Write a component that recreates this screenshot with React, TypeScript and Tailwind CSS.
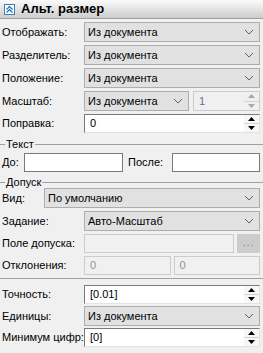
import type { ReactNode } from "react";

const font = { fontFamily: '"Liberation Sans", Arial, sans-serif' };

function Chevron() {
  return (
    <svg width="10" height="6" viewBox="0 0 10 6" className="shrink-0">
      <path d="M1 1 L5 5 L9 1" fill="none" stroke="#606060" strokeWidth="1" />
    </svg>
  );
}

function Combo({ value, className = "" }: { value: string; className?: string }) {
  return (
    <div
      className={`flex h-[20px] items-center justify-between border border-[#adadad] bg-[#e1e1e1] pl-[3px] pr-[5px] text-[11px] text-black ${className}`}
    >
      <span className="whitespace-nowrap">{value}</span>
      <Chevron />
    </div>
  );
}

function SpinArrows({ disabled = false }: { disabled?: boolean }) {
  const c = disabled ? "#a8a8a8" : "#000";
  return (
    <div className={`flex h-full w-[15px] shrink-0 flex-col ${disabled ? "" : "bg-[#f7f7f7]"}`}>
      <div className="flex flex-1 items-center justify-center border-b border-[#d4d4d4]">
        <svg width="7" height="4" viewBox="0 0 7 4">
          <path d="M0 4 L3.5 0 L7 4 Z" fill={c} />
        </svg>
      </div>
      <div className="flex flex-1 items-center justify-center">
        <svg width="7" height="4" viewBox="0 0 7 4">
          <path d="M0 0 L3.5 4 L7 0 Z" fill={c} />
        </svg>
      </div>
    </div>
  );
}

function SpinBox({
  value,
  disabled = false,
  className = "",
}: {
  value: string;
  disabled?: boolean;
  className?: string;
}) {
  return (
    <div
      className={`flex items-center border text-[11px] ${
        disabled
          ? "h-[20px] border-[#cccccc] bg-[#f0f0f0] text-[#6d6d8d]"
          : "h-[19px] border-[#7a7a7a] border-b-[#e3e3e3] border-r-[#e3e3e3] bg-white text-black"
      } ${className}`}
    >
      <span className="flex-1 pl-[5px]">{value}</span>
      <SpinArrows disabled={disabled} />
    </div>
  );
}

function TextBox({
  value = "",
  disabled = false,
  className = "",
}: {
  value?: string;
  disabled?: boolean;
  className?: string;
}) {
  return (
    <div
      className={`flex h-[19px] items-center border pl-[5px] text-[11px] ${
        disabled ? "border-[#cccccc] bg-[#f0f0f0] text-[#909090]" : "border-[#7a7a7a] bg-white text-black"
      } ${className}`}
    >
      {value}
    </div>
  );
}

function Row({ label, children, labelW = "w-[84px]" }: { label: string; children: ReactNode; labelW?: string }) {
  return (
    <div className="flex items-center">
      <span className={`${labelW} shrink-0 whitespace-nowrap pl-[2px] text-[11px] text-black`}>{label}</span>
      <div className="flex min-w-0 flex-1 items-center gap-[3px]">{children}</div>
    </div>
  );
}

function Group({ title }: { title: string }) {
  return (
    <div className="flex h-[12px] items-center gap-[1px] text-[11px] leading-none text-black">
      <div className="h-px w-[5px] bg-[#a0a0a0]" />
      <span>{title}</span>
      <div className="h-px flex-1 bg-[#a0a0a0]" />
    </div>
  );
}

export default function App() {
  return (
    <div className="h-[353px] w-[263px] overflow-hidden bg-[#f0f0f0]" style={font}>
      <div className="flex h-[19px] items-center gap-[6px] border-b border-[#a0a0a0] bg-gradient-to-b from-[#fbfbfb] to-[#cdcdcd] pl-[4px]">
        <div className="flex h-[11px] w-[11px] items-center justify-center border border-[#3c7fb1] bg-white">
          <svg width="9" height="9" viewBox="0 0 9 9">
            <path
              d="M1.5 4.5 L4.5 1.5 L7.5 4.5 M1.5 7.5 L4.5 4.5 L7.5 7.5"
              fill="none"
              stroke="#1e73be"
              strokeWidth="1.2"
            />
          </svg>
        </div>
        <span className="text-[13px] font-bold text-black">Альт. размер</span>
      </div>

      <div className="flex flex-col gap-[3px] pr-[3px] pt-[3px]">
        <Row label="Отображать:">
          <Combo value="Из документа" className="flex-1" />
        </Row>
        <Row label="Разделитель:">
          <Combo value="Из документа" className="flex-1" />
        </Row>
        <Row label="Положение:">
          <Combo value="Из документа" className="flex-1" />
        </Row>
        <Row label="Масштаб:">
          <Combo value="Из документа" className="w-[105px]" />
          <SpinBox value="1" disabled className="ml-[1px] flex-1" />
        </Row>
        <Row label="Поправка:">
          <SpinBox value="0" className="flex-1" />
        </Row>
      </div>

      <div className="mt-[5px]">
        <Group title="Текст" />
      </div>
      <div className="mt-[3px] flex items-center pr-[3px]">
        <span className="w-[24px] shrink-0 pl-[2px] text-[11px]">До:</span>
        <TextBox className="w-[99px]" />
        <span className="ml-[5px] w-[44px] shrink-0 text-[11px]">После:</span>
        <TextBox className="flex-1" />
      </div>

      <div className="mt-[4px]">
        <Group title="Допуск" />
      </div>
      <div className="flex flex-col gap-[3px] pr-[3px]">
        <Row label="Вид:" labelW="w-[44px]">
          <Combo value="По умолчанию" className="flex-1" />
        </Row>
        <Row label="Задание:">
          <Combo value="Авто-Масштаб" className="flex-1" />
        </Row>
        <Row label="Поле допуска:">
          <TextBox disabled className="flex-1" />
          <div className="flex h-[19px] w-[23px] shrink-0 items-center justify-center bg-[#cccccc] pb-[3px] text-[11px] tracking-[1px] text-[#8a8a9a]">
            ...
          </div>
        </Row>
        <Row label="Отклонения:">
          <TextBox value="0" disabled className="flex-1" />
          <TextBox value="0" disabled className="flex-1" />
        </Row>
      </div>

      <div className="mt-[3px] h-px bg-[#a0a0a0]" />

      <div className="mt-[6px] flex flex-col gap-[2px] pr-[3px]">
        <Row label="Точность:">
          <SpinBox value="[0.01]" className="flex-1" />
        </Row>
        <Row label="Единицы:">
          <Combo value="Из документа" className="flex-1" />
        </Row>
        <Row label="Минимум цифр:">
          <SpinBox value="[0]" className="flex-1" />
        </Row>
      </div>
    </div>
  );
}
